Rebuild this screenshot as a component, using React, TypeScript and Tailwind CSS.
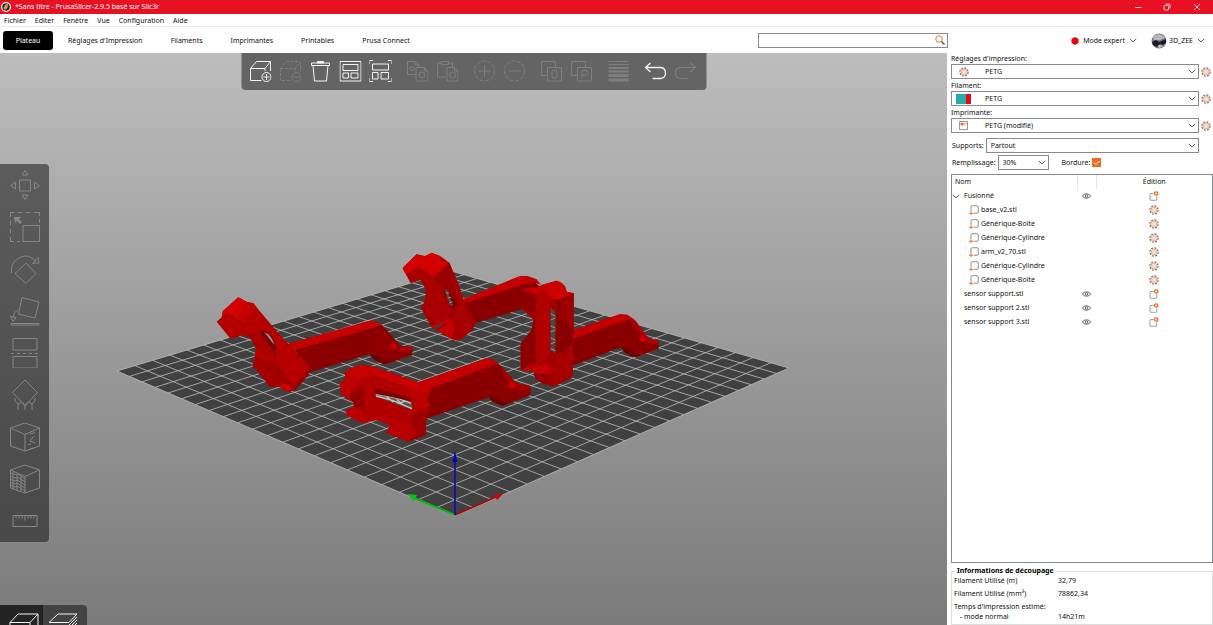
import type { ReactNode } from "react";

type IconProps = { children: ReactNode; dim?: boolean };

const menus = ["Fichier", "Editer", "Fenêtre", "Vue", "Configuration", "Aide"];
const tabs = ["Plateau", "Réglages d'Impression", "Filaments", "Imprimantes", "Printables", "Prusa Connect"];

const objects = [
  { name: "Fusionné", kind: "group" },
  { name: "base_v2.stl", kind: "part" },
  { name: "Générique-Boîte", kind: "part" },
  { name: "Générique-Cylindre", kind: "part" },
  { name: "arm_v2_70.stl", kind: "part" },
  { name: "Générique-Cylindre", kind: "part" },
  { name: "Générique-Boîte", kind: "part" },
  { name: "sensor support.stl", kind: "object" },
  { name: "sensor support 2.stl", kind: "object" },
  { name: "sensor support 3.stl", kind: "object" },
];

/* ---------- small icons ---------- */

function Chevron({ className = "" }: { className?: string }) {
  return (
    <svg viewBox="0 0 8 5" className={`h-[5px] w-2 ${className}`} fill="none" stroke="#444" strokeWidth=".9">
      <path d="M.8 1 4 3.800 7.200 1" />
    </svg>
  );
}

function Gear() {
  return (
    <svg viewBox="0 0 20 20" className="block size-[10px]" fill="none">
      <circle cx="10" cy="10" r="8.300" stroke="#6f6a68" strokeWidth="2.200" strokeDasharray="4 2.500" />
      <circle cx="10" cy="10" r="6.200" fill="#fbdcc8" stroke="#e6a583" strokeWidth="1.800" />
      <circle cx="10" cy="10" r="2.600" fill="#fff" stroke="#eab498" strokeWidth="1" />
    </svg>
  );
}

function Eye() {
  return (
    <svg viewBox="0 0 18 12" className="mx-auto block h-[6px] w-[9px]" fill="none" stroke="#555" strokeWidth="1.800">
      <path d="M1 6C4 .2 14 .2 17 6 14 11.800 4 11.800 1 6Z" />
      <circle cx="9" cy="6" r="2.600" />
    </svg>
  );
}

function EditObject() {
  return (
    <svg viewBox="0 0 20 20" className="block size-[10px]" fill="none">
      <path d="M9 5H4Q2 5 2 7V17q0 1.500 1.500 1.500H14q1.500 0 1.500-1.500v-6" stroke="#777" strokeWidth="1.500" />
      <circle cx="14.500" cy="5" r="3.400" stroke="#ed6b21" strokeWidth="2.600" />
    </svg>
  );
}

function PartIcon() {
  return (
    <svg viewBox="0 0 20 20" className="size-[10px] shrink-0" fill="none">
      <path d="M4 12V3.500Q4 1.500 6 1.500H16.500q2 0 2 2V14.500q0 2-2 2H9" stroke="#6a6a6a" strokeWidth="1.500" />
      <path d="M4 12.500v7.500M0 16.500H8" stroke="#ed6b21" strokeWidth="1.900" />
    </svg>
  );
}

function ToolIcon({ children, dim = false }: IconProps) {
  return (
    <svg
      viewBox="0 0 22 22"
      className={`block size-[22px] ${dim ? "text-[#7f7f7f]" : "text-[#f4f4f4]"}`}
      fill="none"
      stroke="currentColor"
      strokeWidth="1"
    >
      {children}
    </svg>
  );
}

function GizmoIcon({ children }: { children: ReactNode }) {
  return (
    <svg viewBox="0 0 30 30" className="block size-[30px] text-[#868686]" fill="none" stroke="currentColor" strokeWidth="1">
      {children}
    </svg>
  );
}

/* ---------- toolbars ---------- */

const cube = "M1 8.500 7 1.500H21V11M1 8.500V20.500H12M1 8.500H15.500L21 1.500M15.500 8.500V11";

const toolGroups = [
  [
    { label: "Ajouter", icon: <ToolIcon><path d={cube} /><circle cx="17" cy="17" r="4.500" /><path d="M17 14v6M14 17h6" /></ToolIcon> },
    { label: "Supprimer", icon: <ToolIcon dim><path d={cube} strokeDasharray="3 1.500" /><circle cx="17" cy="17" r="4.500" /><path d="M14 17h6" /></ToolIcon> },
    { label: "Supprimer tout", icon: <ToolIcon><path d="M2 5.500H20V3H2ZM8 3V1.500h6V3M3.500 5.500 5 21H17L18.500 5.500" /><path d="M8 2.500h6" strokeWidth="2" /></ToolIcon> },
    { label: "Agencer", icon: <ToolIcon><path d="M.500 1.500H21.500V21H.500ZM3.500 4.500H18.500V10.500H3.500ZM3.500 13H9V18H3.500ZM11.500 13H18.500V18h-7Z" /></ToolIcon> },
    { label: "Agencer la sélection", icon: <ToolIcon><path d="M0 4V.500H3.500M18.500.500H22V4M22 18v3.500h-3.500M3.500 21.500H0V18M3 4H19V10H3ZM3 12.500H8.500V19H3ZM11.500 12.500H19V19h-7.500Z" /></ToolIcon> },
  ],
  [
    { label: "Copier", icon: <ToolIcon dim><path d="M9 14.500H1V1.500H9L12.500 5V7M9.500 7.500H18L21.500 11v10h-12ZM8.500 1.500V5h4M18 7.500V11h3.500" /><circle cx="5.500" cy="8.500" r="2" /><circle cx="15.500" cy="15" r="3" /></ToolIcon> },
    { label: "Coller", icon: <ToolIcon dim><path d="M9.500 17H1V3H5M12 3h4V7M5 1.500h7V4.500H5ZM10.500 7.500H18L21.500 11v10h-11ZM18 7.500V11h3.500" /><circle cx="16" cy="15" r="3" /></ToolIcon> },
  ],
  [
    { label: "Ajouter une instance", icon: <ToolIcon dim><circle cx="11" cy="11" r="10" strokeDasharray="4 1.500" /><path d="M11 5v12M5 11h12" /></ToolIcon> },
    { label: "Supprimer une instance", icon: <ToolIcon dim><circle cx="11" cy="11" r="10" strokeDasharray="4 1.500" /><path d="M5 11h12" /></ToolIcon> },
  ],
  [
    { label: "Séparer en objets", icon: <ToolIcon dim><path d="M7 15.500H1V1.500H15V7M7 7.500H21V21H7Z" /><rect x="11.500" y="10.500" width="5" height="7.500" rx="1" /></ToolIcon> },
    { label: "Séparer en pièces", icon: <ToolIcon dim><path d="M7 15.500H1V1.500H15V7M7 7.500H21V21H7ZM11.500 18.500V10.500h4q2 0 2 2.200t-2 2.300h-4" /></ToolIcon> },
  ],
  [
    { label: "Hauteur de couche variable", icon: <ToolIcon dim><path d="M1 1.500H21M1 4.500H21" /><path d="M1 8H21M1 11.500H21" strokeWidth="1.800" /><path d="M1 15.500H21M1 20H21" strokeWidth="2.800" /></ToolIcon> },
  ],
  [
    { label: "Annuler", icon: <ToolIcon><path d="M1 7.500H16Q21 8 21 13T16 18.500H8M6 3 1 7.500 6 12" strokeWidth="1.300" /></ToolIcon> },
    { label: "Rétablir", icon: <ToolIcon dim><path d="M21 7.500H6Q1 8 1 13T6 18.500H14M16 3l5 4.500L16 12" strokeWidth="1.100" /></ToolIcon> },
  ],
];

const gizmos = [
  { label: "Déplacer", d: "M9.500 10H20.500V21H9.500ZM12 5 15 .500 18 5ZM12 25H18L15 29.500ZM5.500 12V19L.500 15.500ZM24.500 12V19l5-3.500Z" },
  { label: "Redimensionner", d: "M13 13.500H29.500V29.500H13ZM.500.500h4M8 .500h4M16 .500h4M24 .500h5.500V4M29.500 7v4M.500.500V5M.500 9v4M.500 17v4M.500 25v4.500H4M7 29.500h3", fill: "M4 5H11L9 7 12 10 10 12 7 9 5 11Z" },
  { label: "Tourner", d: "M16 9 26 19.500 16 29.500 5 19.500ZM1.500 19Q.500 9 8 4.500T21 3.500Q24 5 26 8M22.500 9.500 28 3.500 29 9Z" },
  { label: "Positionner sur une surface", d: "M12 1.500 29 6 25 22 8.500 18ZM1 27.500H29V29H1ZM8 14Q3.500 16 3 21M.500 20.500 3 25.500 6 21.500Z" },
  { label: "Couper", d: "M3 .500H27V12H3ZM3 18.500H27V30H3ZM1 15.500h3M7 15.500h3M13 15.500h3M19 15.500h3M25 15.500h3" },
  { label: "Supports", d: "M15 0 27.500 12.500 15 25.500 2.500 12.500ZM8 31V24L5 21V18M8 24l3-2M15 31V26M12 22l3 4 3-4M22 31V24l3-3V18M22 24l-3-2" },
  { label: "Jointure", d: "M15 1 29.500 6V24L15 29 .500 24V6ZM.500 6 15 12.500 29.500 6M15 12.500V29M20 12 25 10.500M24 14 20 19 25 21M18 23l3-1M20 27l4-1" },
  { label: "Surface irrégulière", d: "M15 1 29.500 6V24L15 29 .500 24V6ZM.500 6 15 12.500 29.500 6M15 12.500V29M.500 9 5 10.500 8 10 15 15M.500 12 4 14 8 13.500 15 18M.500 15 4 17 8 16.500 15 21M.500 18 4 20 8 19.500 15 24M.500 21 4 23 8 22.500 15 27M3 8v17M7 10v17M11 12v16" },
  { label: "Mesurer", d: "M3 9.500H27V20.500H3ZM6 9.500v3M9 9.500v3M12 9.500v3M15 9.500v5M18 9.500v3M21 9.500v3M24 9.500v3" },
];

function TopToolbar() {
  return (
    <div className="absolute top-0 left-1/2 flex h-[37px] -translate-x-1/2 items-center gap-[15px] rounded-b-sm bg-[#646464] pr-[10px] pb-[2px] pl-2">
      {toolGroups.map((group, i) => (
        <div key={i} className="flex gap-2">
          {group.map((tool) => (
            <button key={tool.label} type="button" aria-label={tool.label}>
              {tool.icon}
            </button>
          ))}
        </div>
      ))}
    </div>
  );
}

function GizmoToolbar() {
  return (
    <div className="absolute top-[111px] left-0 flex w-[49px] flex-col items-center gap-3 rounded-r-sm bg-linear-to-b from-[#5c5c5c] to-[#494949] py-[6px]">
      {gizmos.map((g) => (
        <button key={g.label} type="button" aria-label={g.label}>
          <GizmoIcon>
            <path d={g.d} />
            {g.fill && <path d={g.fill} fill="currentColor" stroke="none" />}
          </GizmoIcon>
        </button>
      ))}
    </div>
  );
}

function ViewSwitch() {
  return (
    <div className="absolute bottom-0 left-0 flex h-5 overflow-hidden rounded-tr-sm">
      <button type="button" aria-label="Vue 3D" className="flex w-[43px] items-start justify-center bg-[#242424] pt-2 pl-1">
        <svg viewBox="0 0 30 22" className="h-[22px] w-[30px] shrink-0" fill="none" stroke="#f4f4f4">
          <path d="M1 9.500 9 1H29V16M1 9.500V21M1 9.500H21L29 1M21 9.500V21" />
        </svg>
      </button>
      <button type="button" aria-label="Aperçu" className="flex w-11 items-start justify-center bg-[#434343] pt-2 pr-1">
        <svg viewBox="0 0 30 22" className="h-[22px] w-[30px] shrink-0" fill="none" stroke="#f4f4f4">
          <path d="M1 9.500 10 1H29L21 9.500ZM21 12 29 4M21 15l8-8M21 18l8-8M1 12.500H21M1 15.500H21" />
        </svg>
      </button>
    </div>
  );
}

/* ---------- 3D scene ---------- */

const CELLS = 22;
// bed corners: front, right, back, left
const bed = [[455, 516], [789, 368], [451, 271], [117, 371]];

// projective map from the unit square onto the bed
function project(u: number, v: number) {
  const [[x0, y0], [x1, y1], [x2, y2], [x3, y3]] = bed;
  const dx1 = x1 - x2, dx2 = x3 - x2, dx3 = x0 - x1 + x2 - x3;
  const dy1 = y1 - y2, dy2 = y3 - y2, dy3 = y0 - y1 + y2 - y3;
  const det = dx1 * dy2 - dx2 * dy1;
  const g = (dx3 * dy2 - dx2 * dy3) / det;
  const h = (dx1 * dy3 - dx3 * dy1) / det;
  const w = g * u + h * v + 1;
  const x = ((x1 - x0 + g * x1) * u + (x3 - x0 + h * x3) * v + x0) / w;
  const y = ((y1 - y0 + g * y1) * u + (y3 - y0 + h * y3) * v + y0) / w;
  return `${x.toFixed(2)} ${y.toFixed(2)}`;
}

const gridPath = Array.from({ length: CELLS + 1 }, (_, i) => {
  const t = i / CELLS;
  return `M${project(t, 0)}L${project(t, 1)}M${project(0, t)}L${project(1, t)}`;
}).join("");

function Scene() {
  return (
    <svg viewBox="0 53 947 572" preserveAspectRatio="xMidYMid slice" className="absolute inset-0 size-full">
      <polygon points={bed.map((p) => p.join(",")).join(" ")} fill="#404040" />
      <path d={gridPath} stroke="#bcbcbc" strokeWidth=".8" fill="none" />

      {/* sensor support, left */}
      <g transform="translate(200 240) scale(.33333)">
        <path fill="#8a0000" d="M285 330 545 254 600 316 637 324V346L555 373Q518 362 508 342L325 398Z" />
        <path fill="#c40000" d="M255 314 505 243 525 243 546 255 285 331Z" />
        <path fill="#9c0000" d="M546 255 600 316 588 312Q570 306 566 322L515 345 508 340Z" opacity=".4" />
        <path fill="#6c0000" d="M508 342 530 346 568 366 555 373Q518 362 508 342Z" />
        <circle cx="580" cy="320" r="10" fill="#c40000" />
        <path fill="#b40000" d="M604 320 637 320V330L594 336Z" />
        <path fill="#b60000" d="M50 245 65 232 68 215 115 172 140 185 160 190 235 280 262 308 328 382 325 405 283 452 262 455 240 440 210 440 158 378 165 345 168 325 150 295 130 285 92 297Z" />
        <path fill="#d20000" d="M68 213 115 172 140 186 108 238 88 222 66 232Z" />
        <path fill="#c40000" d="M140 186 160 190 170 202 120 245 108 238Z" />
        <path fill="#a40000" d="M158 378 166 345 220 366 285 440 283 452 262 455 240 440 210 440Z" />
        <path fill="#aa0000" d="M168 325 150 290Q180 268 205 286L228 350 220 366Z" />
        <path fill="#780000" d="M180 277Q200 270 214 288 230 304 228 345Z" />
        <path fill="#6a6a66" d="M192 276Q212 282 224 318Z" />
        <path stroke="#c0c0bc" strokeWidth="2" d="M196 279l20 20M204 282l18 28" />
        <path fill="#980000" d="M328 385 326 405 283 452 279 440Z" />
        <path fill="#d00000" d="M240 440 250 430Q268 434 276 446L262 455Z" />
        <path stroke="#7c0000" strokeWidth="3" fill="none" d="M66 232 90 224 118 245 154 292Q176 268 200 274M218 366 282 442" />
      </g>

      <g transform="translate(390 240) scale(.33333)">
        {/* sensor support 2, back */}
        <path fill="#880000" d="M215 190 425 118 450 140 400 206 255 250 230 255Z" />
        <path fill="#c40000" d="M212 180 390 108H412L440 118 453 134 425 126 222 190Z" />
        <path fill="#a60000" d="M38 85 80 43 105 48 125 38 150 48 178 68 205 130 222 185 254 248 250 268 208 303 183 297 145 272 125 262 93 205 105 180 108 150 92 120 62 130Z" />
        <path fill="#d40000" d="M38 83 80 43 105 50 125 38 150 48 154 62 178 68 128 112 104 90 82 82 60 98 45 100Z" />
        <path fill="#960000" d="M128 112 178 70 220 180 215 195 188 202 165 145Z" />
        <path fill="#a80000" d="M178 68 222 185 254 248 215 220 205 190Z" />
        <path fill="#740000" d="M160 150Q178 148 198 190L190 210Z" />
        <path fill="#4c4a48" d="M163 148 174 153 190 198 180 195Z" />
        <path stroke="#c0c0c0" strokeWidth="2" d="M168 160l8-2M173 174l10-2M178 188l10-3" />
        <path fill="#c40000" d="M125 262 142 240 160 248 155 258 173 232 198 262 183 297 145 272Z" />
        <path stroke="#780000" strokeWidth="3" fill="none" d="M188 202Q210 215 173 234M198 262 205 290M142 268 175 248" />
        <path fill="#404040" d="M136 258 158 248 150 262 134 266Z" />

        {/* fusionné, right */}
        <path fill="#880000" d="M545 290 725 234 775 295 806 304V326L738 352Q705 346 692 322L545 378Z" />
        <path fill="#c40000" d="M545 272 690 222 712 224 735 240 715 238 545 298Z" />
        <path fill="#b00000" d="M718 238 735 240 778 298 806 300V308L775 312Z" />
        <path fill="#6c0000" d="M692 322 714 328 752 346 738 352Q705 346 692 322Z" />
        <circle cx="758" cy="296" r="10" fill="#c80000" />
        <path fill="#a20000" d="M395 148 440 142 455 135 500 122 525 138 530 155 551 160 548 410 490 440 440 420 430 392 392 390V310L425 270 430 240 395 205Z" />
        <path fill="#cc0000" d="M395 148 425 142 440 146 455 135 500 122Q522 124 530 155L551 160 510 180 478 176 468 150Q452 144 440 166L420 152Z" />
        <path fill="#8e0000" d="M397 154 438 168V380L420 382 392 388V312L425 270 430 240V218L397 205Z" />
        <path fill="#b00000" d="M440 165Q452 148 468 150L480 178V345L436 382Z" />
        <path fill="#860000" d="M500 180H510L551 160 548 300Q545 330 500 340V235Z" />
        <path fill="#9c0000" d="M512 184 551 162V285Q530 240 512 235Z" />
        <path fill="#484848" d="M482 202 496 216V340L482 332Z" />
        <path stroke="#c0c0c0" strokeWidth="2" d="M482 222l14 6M482 240l14-6M482 258l14 6M482 276l14-6M482 294l14 6M482 312l14-6M482 326l14 6" />
        <path fill="#a80000" d="M498 345Q540 335 548 300V410L490 440Z" />
        <path fill="#c40000" d="M400 386 425 372 438 382 470 368 486 384 480 402 434 400 430 390 402 394Z" />
        <path fill="#980000" d="M430 402H482V430L465 434 440 420Z" />
      </g>

      {/* sensor support 3, front */}
      <g transform="translate(200 240) scale(.33333)">
        <path fill="#8a0000" d="M680 445 893 368 950 430 992 440V465L910 497Q875 490 866 472L677 537Z" />
        <path fill="#c40000" d="M655 426 855 356 875 357 894 370 690 446Z" />
        <path fill="#a60000" d="M894 370 950 430 992 438V446L948 452 920 420Z" />
        <path fill="#6c0000" d="M866 472 890 476 926 490 910 497Q875 490 866 472Z" />
        <circle cx="936" cy="436" r="10" fill="#cc0000" />
        <path fill="#bc0000" d="M418 432 435 418V392L480 374 520 380 655 427 694 446 680 480 692 496 678 540V585L625 605 558 578 570 555 530 540 485 550 438 525 440 510 465 500 460 487 425 465Z" />
        <path fill="#b00000" d="M470 440Q480 405 540 408L620 440Q645 452 650 490L640 520 660 540 640 560 530 530 485 548 460 520 492 500Z" />
        <path fill="#920000" d="M462 450 492 440V515L462 500 460 487 448 470Z" />
        <path fill="#c80000" d="M435 392 480 374 520 380 655 427 694 446 645 460Q620 430 540 410 500 402 478 420Z" />
        <path fill="#545452" d="M525 460 622 480Q640 490 636 510L525 468Z" />
        <path stroke="#c4c4c4" strokeWidth="4" fill="none" d="M528 462 590 474 634 490M528 468 580 482 636 506M560 470l20 16M590 478l18 16M616 484l-24 6" />
        <path fill="#7c0000" d="M525 445 622 470 634 484 560 468 525 462Z" />
        <path fill="#9e0000" d="M640 520 692 496 678 540V585L625 605 630 560Z" />
        <path fill="#b80000" d="M558 578 572 556 640 560 646 578 625 605Z" />
        <path fill="#c00000" d="M438 510 462 502 492 512 485 526 440 520Z" />
      </g>

      {/* axes */}
      <path d="M455 515 412 497" stroke="#0db014" strokeWidth="2.200" />
      <polygon points="407,494 417,495 414,501" fill="#0cc416" />
      <path d="M455 515 498 496" stroke="#b00808" strokeWidth="1.800" />
      <polygon points="503,494 494,494 497,500" fill="#c80404" />
      <path d="M455 515V460" stroke="#1010b4" strokeWidth="1.800" />
      <polygon points="455,451 457.500,462 452.500,462" fill="#0606c8" />
    </svg>
  );
}

/* ---------- side panel ---------- */

function Preset({ id, label, value, icon }: { id: string; label: string; value: string; icon: ReactNode }) {
  return (
    <div>
      <label htmlFor={id} className="block h-[11px] leading-[11px]">{label}</label>
      <div className="flex items-center gap-[2px]">
        <div className="relative flex-1">
          <select id={id} className="block h-[15px] w-full appearance-none border border-[#8a8a8a] bg-white pl-[33px]">
            <option>{value}</option>
          </select>
          <span className="pointer-events-none absolute inset-y-0 left-[5px] flex w-[15px] items-center justify-center">{icon}</span>
          <Chevron className="pointer-events-none absolute top-[5px] right-[3px]" />
        </div>
        <button type="button" aria-label={`Modifier ${value}`}>
          <Gear />
        </button>
      </div>
    </div>
  );
}

function ObjectTable() {
  return (
    <div className="mt-1 min-h-0 flex-1 overflow-hidden border border-[#828790]">
      <table className="w-full table-fixed border-collapse text-left">
        <thead>
          <tr className="h-[14px]">
            <th className="pl-[3px] font-normal">Nom</th>
            <th className="w-[19px] border-x border-[#e5e5e5]" aria-label="Visible" />
            <th className="w-[116px] text-center font-normal">Édition</th>
          </tr>
        </thead>
        <tbody>
          {objects.map((o, i) => (
            <tr key={i} className="h-[14px]">
              <td className="p-0">
                <div className="flex items-center">
                  {o.kind === "group" && <Chevron className="mr-1" />}
                  {o.kind === "part" && (
                    <span className="mr-[2px] ml-[17px] flex">
                      <PartIcon />
                    </span>
                  )}
                  <span className={o.kind === "object" ? "ml-3" : ""}>{o.name}</span>
                </div>
              </td>
              <td className="p-0">{o.kind !== "part" && <Eye />}</td>
              <td className="p-0">
                <button type="button" aria-label={`Modifier ${o.name}`} className="mx-auto block">
                  {o.kind === "part" ? <Gear /> : <EditObject />}
                </button>
              </td>
            </tr>
          ))}
        </tbody>
      </table>
    </div>
  );
}

function SidePanel() {
  return (
    <aside className="flex w-[266px] shrink-0 flex-col bg-white pl-1">
      <div className="space-y-px pr-[2px]">
        <Preset id="print" label="Réglages d'impression:" value="PETG" icon={<Gear />} />
        <Preset
          id="filament"
          label="Filament:"
          value="PETG"
          icon={
            <span className="flex h-[10px] w-[15px]">
              <span className="flex-1 bg-[#27aaa8]" />
              <span className="w-[5px] bg-[#e30b16]" />
            </span>
          }
        />
        <Preset
          id="printer"
          label="Imprimante:"
          value="PETG (modifié)"
          icon={
            <svg viewBox="0 0 18 18" className="size-[9px]" fill="none">
              <path d="M1 1H17V17H1Z" stroke="#777" strokeWidth="1.500" />
              <path d="M1 6H17" stroke="#ed6b21" strokeWidth="1.500" />
              <path d="M4 3.500H9V7L6.500 10 4 7Z" fill="#ed6b21" />
            </svg>
          }
        />
      </div>

      <div className="mt-[5px] flex items-center gap-[2px] pr-[14px] pl-px">
        <label htmlFor="supports">Supports:</label>
        <div className="relative flex-1">
          <select id="supports" className="block h-[15px] w-full appearance-none border border-[#8a8a8a] bg-white pl-1">
            <option>Partout</option>
          </select>
          <Chevron className="pointer-events-none absolute top-[5px] right-[3px]" />
        </div>
      </div>

      <div className="mt-[2px] flex items-center pl-px">
        <label htmlFor="infill">Remplissage:</label>
        <div className="relative ml-[2px] w-[51px]">
          <select id="infill" className="block h-[15px] w-full appearance-none border border-[#8a8a8a] bg-white pl-1">
            <option>30%</option>
          </select>
          <Chevron className="pointer-events-none absolute top-[5px] right-[3px]" />
        </div>
        <label htmlFor="brim" className="ml-[13px]">Bordure:</label>
        <span className="relative ml-[2px] size-[9px]">
          <input id="brim" type="checkbox" defaultChecked className="block size-[9px] appearance-none bg-[#ed6b21]" />
          <svg viewBox="0 0 9 9" className="pointer-events-none absolute inset-0" fill="none" stroke="#fff">
            <path d="M2 4.500 4 6.500 7.500 3" />
          </svg>
        </span>
      </div>

      <ObjectTable />

      <fieldset className="mt-[3px] h-[59px] shrink-0 border border-[#dcdcdc] pl-[2px]">
        <legend className="ml-[2px] px-px leading-[10px] font-bold text-black">Informations de découpage</legend>
        <dl className="grid grid-cols-[104px_1fr] leading-[10px]">
          <dt className="mb-[3px]">Filament Utilisé (m)</dt>
          <dd>32,79</dd>
          <dt className="mb-[3px]">Filament Utilisé (mm³)</dt>
          <dd>78862,34</dd>
          <dt className="col-span-2">Temps d'impression estimé:</dt>
          <dt className="pl-[6px]">- mode normal</dt>
          <dd>14h21m</dd>
        </dl>
      </fieldset>
    </aside>
  );
}

/* ---------- window ---------- */

function TitleBar() {
  return (
    <header className="flex h-[14px] shrink-0 items-center bg-[#e81123] pl-[1px] text-white">
      <svg viewBox="0 0 20 20" className="size-[10px]">
        <circle cx="10" cy="10" r="10" fill="#fff" />
        <circle cx="10" cy="10" r="7.500" fill="#2a2320" />
        <path d="M5 12 9 5 14 4 13 12 8 16Z" fill="#e8934a" />
      </svg>
      <h1 className="ml-1">*Sans titre - PrusaSlicer-2.9.5 basé sur Slic3r</h1>
      <div className="ml-auto flex">
        <button type="button" aria-label="Réduire" className="flex h-[14px] w-[29px] items-center justify-center">
          <svg viewBox="0 0 8 8" className="size-2" stroke="#fff" strokeWidth=".8"><path d="M1 4.500h6.500" /></svg>
        </button>
        <button type="button" aria-label="Niveau inférieur" className="flex h-[14px] w-[29px] items-center justify-center">
          <svg viewBox="0 0 8 8" className="size-2" fill="none" stroke="#fff" strokeWidth=".8">
            <rect x="1" y="2.500" width="4.500" height="4.500" rx=".8" />
            <path d="M2.500 1H6q1 0 1 1V5.500" />
          </svg>
        </button>
        <button type="button" aria-label="Fermer" className="flex h-[14px] w-8 items-center justify-center">
          <svg viewBox="0 0 8 8" className="size-2" stroke="#fff" strokeWidth=".8"><path d="m1 1 6 6M7 1 1 7" /></svg>
        </button>
      </div>
    </header>
  );
}

export default function App() {
  return (
    <div className="flex h-screen flex-col overflow-hidden bg-white font-['Noto_Sans',sans-serif] text-[7px] leading-[10px] text-[#111]">
      <TitleBar />

      <nav className="flex h-[13px] shrink-0 items-center gap-[9px] border-b border-[#ececec] pt-px pl-1">
        {menus.map((m) => (
          <button key={m} type="button">{m}</button>
        ))}
      </nav>

      <div className="flex h-[26px] shrink-0 items-center pt-px pl-[3px]">
        {tabs.map((t, i) => (
          <button
            key={t}
            type="button"
            className={i === 0 ? "mr-px h-[19px] w-[50px] rounded-[3px] bg-black text-white" : "h-[19px] px-[14px]"}
          >
            {t}
          </button>
        ))}
        <div className="relative ml-auto w-[190px]">
          <input type="text" aria-label="Rechercher" className="block h-[15px] w-full border border-[#8a8a8a] px-1 outline-none" />
          <svg viewBox="0 0 20 20" className="pointer-events-none absolute top-[2px] right-[3px] size-[10px]" fill="none">
            <circle cx="8" cy="8" r="6.500" stroke="#e0743c" strokeWidth="2" />
            <path d="m13 13 6 6" stroke="#555" strokeWidth="3" />
          </svg>
        </div>
        <div className="flex w-[265px] items-center justify-end pr-2">
          <button type="button" className="flex items-center">
            <svg viewBox="0 0 8 8" className="mr-1 size-2"><path d="M4 0 7.500 2V6L4 8 .500 6V2Z" fill="#e2060f" /></svg>
            Mode expert
            <Chevron className="ml-1" />
          </button>
          <button type="button" className="ml-[14px] flex items-center">
            <svg viewBox="0 0 16 16" className="mr-[2px] size-4">
              <circle cx="8" cy="8" r="7.500" fill="#7d7a86" />
              <path d="M2 4Q8-2 14 5L9 7 3 7Z" fill="#b9b6c4" />
              <path d="M1 9 5 7 8 9 15 6V10L12 12 9 11 6 14 2 12Z" fill="#1d1b22" />
              <path d="M7 12 12 13 8 15Z" fill="#d5d2da" />
            </svg>
            3D_ZEE
            <Chevron className="ml-1" />
          </button>
        </div>
      </div>

      <div className="flex min-h-0 flex-1">
        <main className="relative min-w-0 flex-1 overflow-hidden bg-linear-to-b from-[#bdbdbd] to-[#7b7b7b]">
          <Scene />
          <TopToolbar />
          <GizmoToolbar />
          <ViewSwitch />
        </main>
        <SidePanel />
      </div>
    </div>
  );
}
